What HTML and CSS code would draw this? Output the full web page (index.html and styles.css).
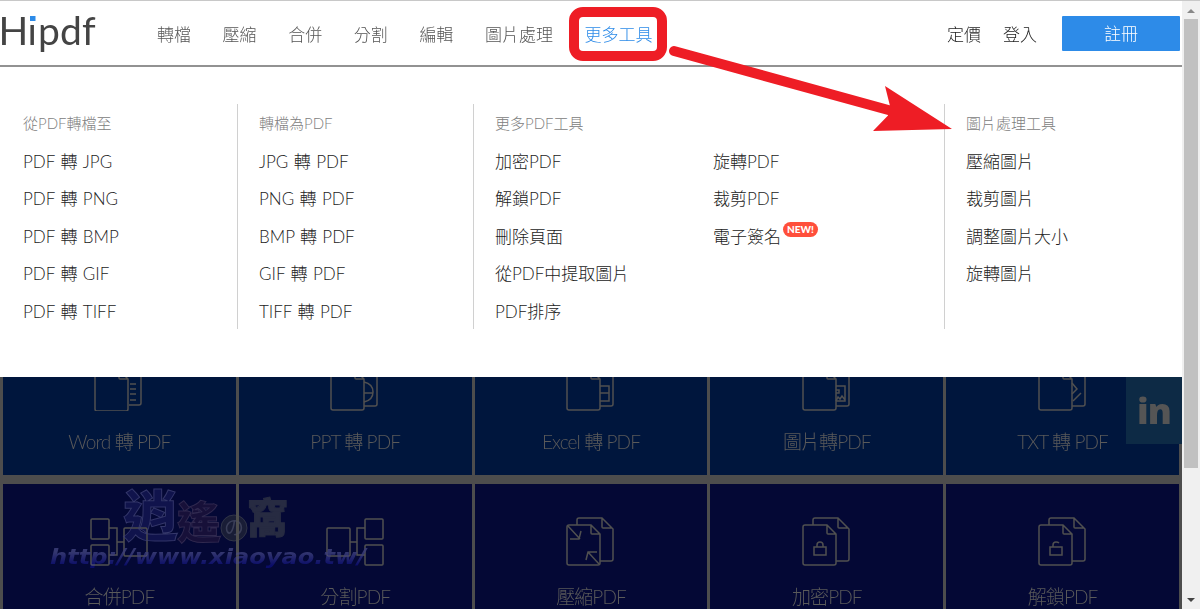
FILE: index.html
```
<!doctype html>
<html lang="zh-Hant">
<head>
<meta charset="utf-8">
<meta name="viewport" content="width=device-width, initial-scale=1">
<title>HiPDF</title>
<link rel="stylesheet" href="styles.css">
</head>
<body>
<svg class="defs" width="0" height="0">
  <symbol id="pages" viewBox="0 0 50 50">
    <path d="M11 9V4q0-2 2-2h23l11 11v30q0 2-2 2H34M36 2v9q0 1 1 1h9"/>
    <path d="M3 9h22l9 9v29q0 2-2 2H3q-2 0-2-2V11q0-2 2-2zM25 9v8q0 1 1 1h8"/>
  </symbol>
</svg>
<div class="window">
  <div class="page">
    <header class="header">
      <a class="logo">
        <svg width="104" height="60" viewBox="0 0 104 60">
          <text x="-1.5 27.500 38 60 82" y="44">Hipdf</text>
          <rect class="logo-gap" x="28" y="10" width="9" height="12"/>
          <rect class="logo-dot" x="30" y="15" width="5.5" height="5"/>
        </svg>
      </a>
      <nav class="nav">
        <a>轉檔</a>
        <a>壓縮</a>
        <a>合併</a>
        <a>分割</a>
        <a>編輯</a>
        <a>圖片處理</a>
        <a class="active">更多工具</a>
      </nav>
      <div class="user">
        <a>定價</a>
        <a>登入</a>
        <a class="signup">註冊</a>
      </div>
    </header>

    <div class="menu">
      <div class="menu-col">
        <h4>從PDF轉檔至</h4>
        <a>PDF 轉 JPG</a>
        <a>PDF 轉 PNG</a>
        <a>PDF 轉 BMP</a>
        <a>PDF 轉 GIF</a>
        <a>PDF 轉 TIFF</a>
      </div>
      <div class="menu-col">
        <h4>轉檔為PDF</h4>
        <a>JPG 轉 PDF</a>
        <a>PNG 轉 PDF</a>
        <a>BMP 轉 PDF</a>
        <a>GIF 轉 PDF</a>
        <a>TIFF 轉 PDF</a>
      </div>
      <div class="menu-col wide">
        <h4>更多PDF工具</h4>
        <div class="menu-split">
          <div>
            <a>加密PDF</a>
            <a>解鎖PDF</a>
            <a>刪除頁面</a>
            <a>從PDF中提取圖片</a>
            <a>PDF排序</a>
          </div>
          <div>
            <a>旋轉PDF</a>
            <a>裁剪PDF</a>
            <a>電子簽名<span class="new">NEW!</span></a>
          </div>
        </div>
      </div>
      <div class="menu-col">
        <h4>圖片處理工具</h4>
        <a>壓縮圖片</a>
        <a>裁剪圖片</a>
        <a>調整圖片大小</a>
        <a>旋轉圖片</a>
      </div>
    </div>

    <div class="tiles">
      <a class="tile">
        <svg class="icon" viewBox="0 0 50 50"><path d="M11 9V2h25l11 11v29q0 2-2 2H35M3 9h22l9 9v30q0 2-2 2H3q-2 0-2-2V9M25 9v8q0 1 1 1h8M36 23h6M36 28h6M36 33h6M36 39h6"/></svg>
        <span>Word 轉 PDF</span>
      </a>
      <a class="tile">
        <svg class="icon" viewBox="0 0 50 50"><use href="#pages"/><path d="M34 21q9 2 9 10t-9 10M34 32h9"/></svg>
        <span>PPT 轉 PDF</span>
      </a>
      <a class="tile">
        <svg class="icon" viewBox="0 0 50 50"><use href="#pages"/><path d="M34 25h9v15h-9M34 32h9"/></svg>
        <span>Excel 轉 PDF</span>
      </a>
      <a class="tile">
        <svg class="icon" viewBox="0 0 50 50"><use href="#pages"/><path d="M34 25h9v15h-9M34 29h3v3h-3M34 40l2-4 2 2 2-3 3 4"/></svg>
        <span>圖片轉PDF</span>
      </a>
      <a class="tile">
        <svg class="icon" viewBox="0 0 50 50"><use href="#pages"/><path d="M34 22l5 6-5 5M43 32l-8 8"/></svg>
        <span>TXT 轉 PDF</span>
      </a>
      <a class="tile dark">
        <svg class="icon wide-icon" viewBox="0 0 58 50"><rect x="1" y="3" width="18" height="20" rx="1"/><rect x="1" y="29" width="18" height="20" rx="1"/><rect x="34" y="12" width="23" height="28" rx="1"/><path d="M19 12h8v27h-8M27 26h7"/></svg>
        <span>合併PDF</span>
      </a>
      <a class="tile dark">
        <svg class="icon wide-icon" viewBox="0 0 58 50"><rect x="39" y="3" width="18" height="20" rx="1"/><rect x="39" y="29" width="18" height="20" rx="1"/><rect x="1" y="12" width="23" height="28" rx="1"/><path d="M39 12h-8v27h8M24 26h7"/></svg>
        <span>分割PDF</span>
      </a>
      <a class="tile dark">
        <svg class="icon" viewBox="0 0 50 50"><use href="#pages"/><path d="M2 10l12 13M15 15l-2 8H4M33 48L22 36M20 44l2-8h9"/></svg>
        <span>壓縮PDF</span>
      </a>
      <a class="tile dark">
        <svg class="icon" viewBox="0 0 50 50"><use href="#pages"/><path d="M12 31h12v8H12zM15 31v-2q0-3 3-3t3 3v2"/></svg>
        <span>加密PDF</span>
      </a>
      <a class="tile dark">
        <svg class="icon" viewBox="0 0 50 50"><use href="#pages"/><path d="M12 31h12v8H12zM15 31v-2q0-3 3-3 2 0 3 1"/></svg>
        <span>解鎖PDF</span>
      </a>
    </div>
    <a class="linkedin">in</a>
  </div>

  <div class="scrollbar">
    <svg width="18" height="18" viewBox="0 0 18 18"><path d="M5 12l4-4 4 4z"/></svg>
    <div class="thumb"></div>
    <svg class="down" width="18" height="18" viewBox="0 0 18 18"><path d="M5 7l4 4 4-4z"/></svg>
  </div>
</div>

<!-- site stamp -->
<svg class="stamp" width="330" height="100" viewBox="0 -10 330 100">
  <defs>
    <linearGradient id="fade" x1="0" y1="0" x2="0" y2="1">
      <stop offset=".3" stop-color="#34376f"/>
      <stop offset=".85" stop-color="#0b0d68"/>
    </linearGradient>
  </defs>
  <g class="stamp-name">
    <text x="73" y="50" font-size="55" fill="#10134c" stroke="#34376a">逍</text>
    <text x="127" y="53" font-size="44" fill="#171039" stroke="#30294f">遙</text>
    <circle cx="184" cy="42" r="13" fill="#191d36" stroke="#303448"/>
    <text class="no" x="174" y="49" font-size="20">の</text>
    <text x="197" y="47" font-size="41" fill="#272b42" stroke="#272b42">窩</text>
  </g>
  <text class="stamp-url" x="0" y="78" textLength="316" lengthAdjust="spacingAndGlyphs">http://www.xiaoyao.tw/</text>
</svg>

<!-- highlight and arrow over the menu -->
<svg class="marks" width="1200" height="140" viewBox="0 0 1200 140">
  <rect x="574" y="12" width="88" height="44" rx="9"/>
  <path class="shaft" d="M674 51L892 111"/>
  <path class="head" d="M885 86l67 43-79 2 15-15.500 2-9.500z"/>
</svg>
</body>
</html>
```
FILE: styles.css
```
* {
  box-sizing: border-box;
}

body {
  margin: 0;
  height: 609px;
  overflow: hidden;
  position: relative;
  background: #fff;
  font-family: Lato, "Noto Sans CJK TC", sans-serif;
  font-weight: 300;
  font-size: 17px;
  color: #222;
}

h4 {
  margin: 0;
  font-size: 15px;
  font-weight: 300;
  line-height: 37.5px;
  color: #808080;
}

.defs {
  display: none;
}

.window {
  display: flex;
  height: 609px;
  border-top: 1px solid #c8c8c8;
}

.page {
  position: relative;
  width: 1182px;
  height: 608px;
  overflow: hidden;
  background: #4d4d4d;
}

/* top bar */
.header {
  display: flex;
  align-items: center;
  height: 66px;
  background: #fff;
  border-bottom: 2px solid #929292;
}

.logo {
  width: 157px;
  height: 64px;
}

.logo text {
  font-family: Lato, sans-serif;
  font-weight: 400;
  font-size: 39px;
  fill: #444;
}

.logo-gap {
  fill: #fff;
}

.logo-dot {
  fill: #2d8be8;
}

.nav {
  display: flex;
  gap: 31.6px;
  color: #555;
}

.nav .active {
  color: #2d8be8;
}

.user {
  display: flex;
  align-items: center;
  gap: 22px;
  margin-left: auto;
  margin-right: 2px;
}

.signup {
  width: 118px;
  height: 35px;
  margin-left: 3px;
  border-radius: 1px;
  background: #2d8be8;
  color: #fff;
  line-height: 35px;
  text-align: center;
}

/* drop-down */
.menu {
  position: relative;
  z-index: 1;
  display: flex;
  height: 310px;
  padding: 37px 0 48px;
  background: #fff;
}

.menu-col {
  width: 236px;
  padding-top: 1px;
  padding-left: 23px;
  word-spacing: .8px;
}

.menu-col + .menu-col {
  border-left: 1px solid #d0d0d0;
  padding-left: 21px;
}

.menu-col.wide {
  width: 471px;
}

.menu-col:first-child {
  width: 237px;
}

.menu-col a {
  display: block;
  height: 37.5px;
  line-height: 37.5px;
  white-space: nowrap;
}

.menu-split {
  display: grid;
  grid-template-columns: 218px 1fr;
}

.new {
  display: inline-block;
  width: 35px;
  height: 15px;
  margin-left: 2px;
  border-radius: 8px;
  background: #ff4f3b;
  color: #fff;
  font-size: 10px;
  font-weight: 900;
  line-height: 15px;
  text-align: center;
  vertical-align: 10px;
}

/* tool tiles, the first row starts under the menu */
.tiles {
  display: grid;
  grid-template-columns: repeat(5, 1fr);
  grid-auto-rows: 146px;
  column-gap: 3px;
  row-gap: 9px;
  margin-top: -48px;
  padding: 0 3px;
}

.tile {
  display: flex;
  flex-direction: column;
  align-items: center;
  padding-top: 32px;
  background: #00163d;
  color: #5a5a5a;
  font-size: 19px;
  letter-spacing: -.9px;
  line-height: 28px;
}

.tile.dark {
  background: #040835;
}

.icon {
  width: 50px;
  height: 50px;
  margin-bottom: 17px;
  fill: none;
  stroke: #505050;
  stroke-width: 1.5;
}

.wide-icon {
  width: 58px;
}

.linkedin {
  position: absolute;
  right: 0;
  top: 376px;
  width: 56px;
  height: 67px;
  background: #0d2a45;
  color: #555;
  font-family: "Open Sans", sans-serif;
  font-size: 36px;
  font-weight: 800;
  letter-spacing: -1px;
  line-height: 67px;
  text-align: center;
}

/* scrollbar */
.scrollbar {
  display: flex;
  flex-direction: column;
  width: 18px;
  background: #f0f0f0;
  fill: #888;
}

.thumb {
  height: 449px;
  margin: 0 2px;
  background: #c1c1c1;
}

.down {
  margin-top: auto;
  fill: #444;
}

/* overlays */
.stamp {
  position: absolute;
  left: 50px;
  top: 476px;
  mix-blend-mode: lighten;
}

.stamp-name {
  font-family: "Noto Sans CJK TC", sans-serif;
  font-weight: 900;
  stroke-width: 1;
}

.stamp-name .no {
  fill: #3a3e58;
  font-weight: 400;
}

.stamp-url {
  fill: url(#fade);
  font-family: "DejaVu Sans", sans-serif;
  font-size: 21px;
  font-style: italic;
  font-weight: 700;
}

.marks {
  position: absolute;
  left: 0;
  top: 0;
  z-index: 2;
  fill: none;
  stroke: #ee1d25;
  stroke-width: 10;
}

.shaft {
  stroke-linecap: round;
}

.head {
  fill: #ee1d25;
  stroke: none;
}
```
